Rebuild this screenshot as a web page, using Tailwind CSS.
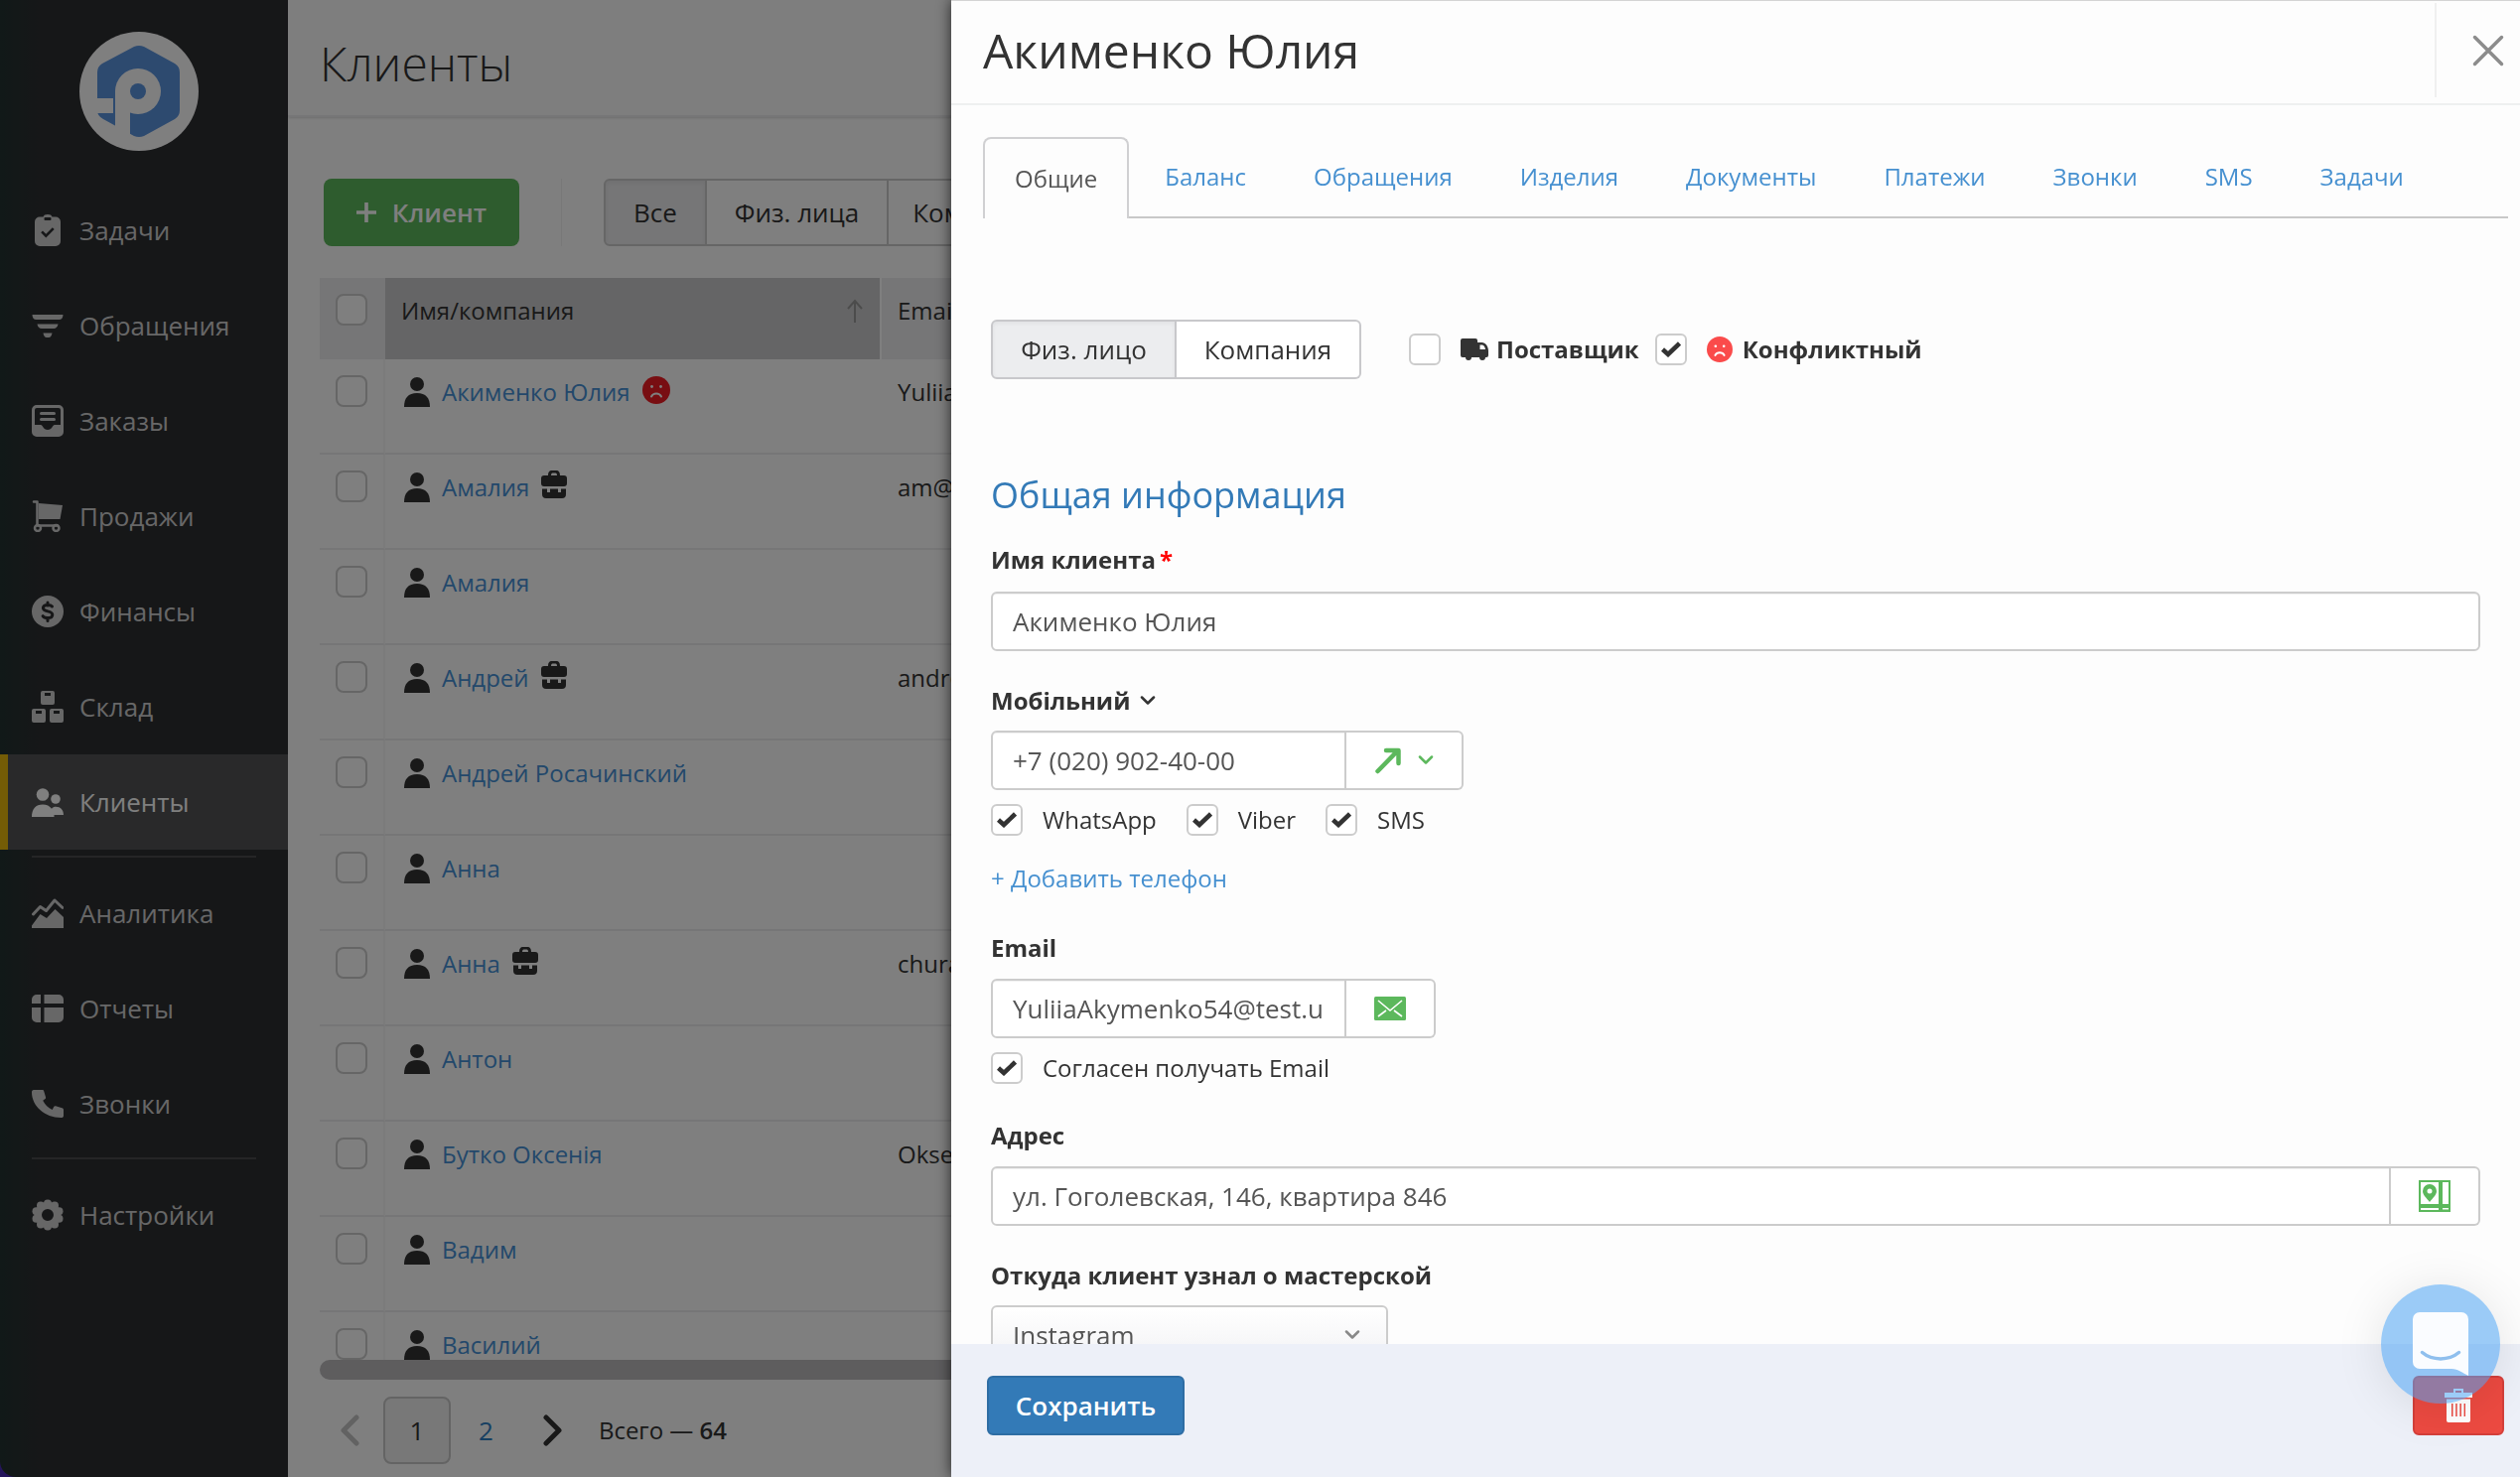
<!DOCTYPE html>
<html lang="ru">
<head>
  <meta charset="UTF-8">
  <meta name="viewport" content="width=device-width, initial-scale=1.0">
  <title>Клиенты – Акименко Юлия</title>
  <script src="https://cdn.jsdelivr.net/npm/@tailwindcss/browser@4"></script>
</head>
<body class="h-screen overflow-hidden bg-[#4a2ab8] font-['Open_Sans','Noto_Sans',sans-serif] text-2xl text-[#333]">

  <!-- Иконки -->
  <svg class="hidden" xmlns="http://www.w3.org/2000/svg">
    <symbol id="i-tasks" viewBox="0 0 32 32"><path fill="currentColor" fill-rule="evenodd" d="M8 2.500h3.500C12 .8 13.500 0 16 0s4 .8 4.500 2.500H24a5 5 0 0 1 5 5V27a5 5 0 0 1-5 5H8a5 5 0 0 1-5-5V7.500a5 5 0 0 1 5-5zM13.500 3a1 1 0 0 0-1 1v1a1 1 0 0 0 1 1h5a1 1 0 0 0 1-1V4a1 1 0 0 0-1-1zM9.200 18.200l1.800-1.800 3.300 3.300 6.500-6.500 1.900 1.900-8.400 8.400z"/></symbol>
    <symbol id="i-leads" viewBox="0 0 32 32"><path fill="currentColor" d="M.5 5h31c0 3-1.500 5-4 5h-23C2 10 .5 8 .5 5zM5.500 14.500h21c-.6 2.800-2 4.500-4.500 4.500H10c-2.500 0-4-1.700-4.500-4.500zM11.500 23.500h9c-.4 2.600-1.600 4.500-3.500 4.500h-2c-1.900 0-3.100-1.900-3.500-4.500z"/></symbol>
    <symbol id="i-orders" viewBox="0 0 32 32"><path fill="currentColor" fill-rule="evenodd" d="M5 0h22a5 5 0 0 1 5 5v22a5 5 0 0 1-5 5H5a5 5 0 0 1-5-5V5a5 5 0 0 1 5-5zm0 3a2 2 0 0 0-2 2v15h6c2 0 2.500 5 7 5s5-5 7-5h6V5a2 2 0 0 0-2-2z"/><path stroke="currentColor" stroke-width="3" stroke-linecap="round" d="M9.500 8.500h13M9.500 14.500h13"/></symbol>
    <symbol id="i-sales" viewBox="0 0 32 32"><path fill="currentColor" d="M7 3l24 2-2.500 14H7z"/><g fill="none" stroke="currentColor" stroke-width="2.500" stroke-linecap="round" stroke-linejoin="round"><path d="M2 1.500h3.500v24H26"/><circle cx="6" cy="28" r="3"/><circle cx="24.500" cy="28" r="3"/></g></symbol>
    <symbol id="i-finance" viewBox="0 0 32 32"><circle cx="16" cy="16" r="16" fill="currentColor"/><path fill="none" stroke="#2c2d2f" stroke-width="3" stroke-linecap="round" d="M20.500 11c-1-1.300-2.500-1.600-4.500-1.600-2.800 0-4.600 1-4.600 3.200 0 4.400 9.400 2.200 9.400 6.600 0 2.300-2 3.400-4.800 3.400-2.200 0-3.900-.6-4.900-2M16 7v3M16 22.500v3"/></symbol>
    <symbol id="i-stock" viewBox="0 0 32 32"><path fill="currentColor" fill-rule="evenodd" d="M11 0h10a2 2 0 0 1 2 2v10a2 2 0 0 1-2 2H11a2 2 0 0 1-2-2V2a2 2 0 0 1 2-2zm2 2v3h6V2zM2 18h10a2 2 0 0 1 2 2v10a2 2 0 0 1-2 2H2a2 2 0 0 1-2-2V20a2 2 0 0 1 2-2zm2 2v3h6v-3zM20 18h10a2 2 0 0 1 2 2v10a2 2 0 0 1-2 2H20a2 2 0 0 1-2-2V20a2 2 0 0 1 2-2zm2 2v3h6v-3z"/></symbol>
    <symbol id="i-clients" viewBox="0 0 32 32"><circle cx="11" cy="8.500" r="6.300" fill="currentColor"/><circle cx="24" cy="13" r="4.800" fill="currentColor"/><path fill="currentColor" d="M0 31c0-8 4-12.500 11-12.500 4 0 7 1.500 9 4.200 1.200-1.300 2.500-1.900 4.200-1.900C29 20.800 32 24 32 29h-9.500v2z"/></symbol>
    <symbol id="i-analytics" viewBox="0 0 32 32"><path fill="none" stroke="currentColor" stroke-width="3" stroke-linecap="round" stroke-linejoin="round" d="M1.500 17L8.500 9.500l6 4L23 3l8 7.500"/><path fill="currentColor" d="M0 31V28.500L8.500 17l6.500 4L23.500 12 32 20v11z"/></symbol>
    <symbol id="i-reports" viewBox="0 0 32 32"><path fill="currentColor" d="M5 2h4v9H0V7a5 5 0 0 1 5-5zM12.500 2H27a5 5 0 0 1 5 5v4H12.500zM0 15h9v15H5a5 5 0 0 1-5-5zM12.500 15H32v10a5 5 0 0 1-5 5H12.500z"/></symbol>
    <symbol id="i-calls" viewBox="0 0 32 32"><path fill="currentColor" d="M2 2h8.500c1 0 1.500.5 1.700 1.300l1.800 6c.3 1-.1 1.600-.8 2l-2 1.500c2.300 4.400 5 7 9.500 9.200l1.500-3c.5-.8 1-1 1.800-.8l6.500 2c1 .3 1.500.8 1.500 1.800V28c0 1.500-1 2-2.500 2C13 30 0 18 0 4.500 0 3 .5 2 2 2z"/></symbol>
    <symbol id="i-settings" viewBox="0 0 32 32"><circle cx="16" cy="16" r="9.500" fill="none" stroke="currentColor" stroke-width="7"/><g fill="currentColor"><circle cx="16" cy="4.500" r="4"/><circle cx="23" cy="6.500" r="4"/><circle cx="27.500" cy="12.300" r="4"/><circle cx="27.500" cy="19.700" r="4"/><circle cx="23" cy="25.500" r="4"/><circle cx="16" cy="27.500" r="4"/><circle cx="9" cy="25.500" r="4"/><circle cx="4.500" cy="19.700" r="4"/><circle cx="4.500" cy="12.300" r="4"/><circle cx="9" cy="6.500" r="4"/></g></symbol>
    <symbol id="i-person" viewBox="0 0 26 30"><circle cx="13" cy="7" r="7" fill="currentColor"/><path fill="currentColor" d="M0 30c0-9 4-14 13-14s13 5 13 14z"/></symbol>
    <symbol id="i-case" viewBox="0 0 26 28"><path fill="currentColor" fill-rule="evenodd" d="M7 5c0-3 1-5 4-5h4c3 0 4 2 4 5h4a3 3 0 0 1 3 3v5a3 3 0 0 1-3 3H3a3 3 0 0 1-3-3V8a3 3 0 0 1 3-3zm3 0h6c0-1.600-.5-2.500-1.500-2.500h-3C10.500 2.500 10 3.400 10 5zM1 18.500h5V22h3v-3.500h8V22h3v-3.500h5V24a4 4 0 0 1-4 4H5a4 4 0 0 1-4-4z"/></symbol>
    <symbol id="i-sad" viewBox="0 0 28 28"><circle cx="14" cy="14" r="14" fill="currentColor"/><circle cx="9.500" cy="10.500" r="1.400" fill="#fff"/><circle cx="18.500" cy="10.500" r="1.400" fill="#fff"/><path fill="none" stroke="#fff" stroke-width="2" stroke-linecap="round" d="M9 20.500c2-4 8-4 10 0"/></symbol>
    <symbol id="i-truck" viewBox="0 0 28 22"><path fill="currentColor" fill-rule="evenodd" d="M2 0h13a2 2 0 0 1 2 2v2h4.500c3.500 0 6.500 4 6.500 8.500V17a2 2 0 0 1-2 2h-1a3 3 0 0 1-6 0h-8a3 3 0 0 1-6 0H2a2 2 0 0 1-2-2V2a2 2 0 0 1 2-2zm17.500 6.500V11H25c-.3-2.500-1.800-4.500-3.500-4.500z"/></symbol>
    <symbol id="i-check" viewBox="0 0 20 16"><path fill="none" stroke="currentColor" stroke-width="4.500" d="M1.500 8l5.500 5L18.500 2"/></symbol>
    <symbol id="i-down" viewBox="0 0 16 10"><path fill="none" stroke="currentColor" stroke-width="2.500" stroke-linecap="round" stroke-linejoin="round" d="M2 1.500l6 6 6-6"/></symbol>
  </svg>

  <div class="flex h-full">
    <aside class="flex w-[290px] shrink-0 flex-col rounded-bl-2xl bg-[#2c2e30] bg-linear-to-r from-[#223230] to-[#2d2e31] to-15% pt-8 text-[26px] text-[#cfcfcf]">
      <a href="#" aria-label="Главная" class="mb-8 ml-20 block size-[120px]">
        <svg viewBox="0 0 120 120" class="size-full">
          <circle cx="60" cy="60" r="60" fill="#fff"/>
          <path fill="#5b94df" d="M55 15q5-2 10 0l31 17q5 3 5 9v38q0 6-5 9L65 105q-5 2-10 0L24 88q-6-3-6-9V41q0-6 5-9z"/>
          <path fill="#fff" d="M17 67h17v15H17zM36 60h15v50H36z"/>
          <circle cx="59" cy="60" r="23" fill="#fff"/>
          <circle cx="59" cy="60" r="8" fill="#5b94df"/>
        </svg>
      </a>
      <nav id="menu"></nav>
    </aside>

    <main class="flex min-w-0 flex-1 flex-col bg-white">
      <header class="flex h-[118px] shrink-0 items-center border-b-2 border-[#ececee] bg-[#fcfdfc] px-8 pt-3 shadow-sm">
        <h1 class="text-5xl font-light">Клиенты</h1>
      </header>

      <div class="flex h-[162px] shrink-0 items-stretch px-9 pt-[62px] pb-8">
        <button type="button" class="flex w-[197px] items-center justify-center gap-4 rounded-lg bg-[#5cb85c] text-[26px] font-semibold text-white">
          <svg class="size-5" viewBox="0 0 22 22"><path stroke="currentColor" stroke-width="4" d="M11 0v22M0 11h22"/></svg>
          Клиент
        </button>
        <div class="mx-[42px] w-px bg-[#f0f0f0]"></div>
        <div class="flex text-[26px] whitespace-nowrap">
          <button type="button" class="w-[104px] rounded-l-md border-2 border-[#ccc] bg-[#ececee] inset-shadow-sm">Все</button>
          <button type="button" class="w-[181px] border-y-2 border-[#ccc]">Физ. лица</button>
          <button type="button" class="w-[183px] rounded-r-md border-2 border-[#ccc]">Компании</button>
        </div>
      </div>

      <div class="ml-8 min-h-0 flex-1 overflow-hidden">
        <table class="w-full table-fixed border-separate border-spacing-0 text-left">
          <colgroup>
            <col class="w-[66px]"><col class="w-[500px]"><col>
          </colgroup>
          <thead>
            <tr class="h-[82px] align-top">
              <th class="bg-[#ececee] pt-4 pl-4"><input type="checkbox" aria-label="Выбрать все" class="block size-8 appearance-none rounded-lg border-2 border-[#ccc] bg-white"></th>
              <th class="border-r-2 border-white bg-[#cacbcc] pt-4 pr-4 pl-4 font-normal">
                <div class="flex h-[34px] items-center justify-between">
                  Имя/компания
                  <svg class="h-6 w-[18px] text-[#999]" viewBox="0 0 18 24"><path fill="none" stroke="currentColor" stroke-width="2" d="M9 24V2M2 10l7-8 7 8"/></svg>
                </div>
              </th>
              <th class="bg-[#ececee] pt-4 pl-4 font-normal"><div class="flex h-[34px] items-center">Email</div></th>
            </tr>
          </thead>
          <tbody id="clients"></tbody>
        </table>
      </div>
      <div class="ml-8 h-5 shrink-0 rounded-l-full bg-[#bcbabd]"></div>

      <footer class="flex h-[98px] shrink-0 items-center pt-1 pl-[52px]">
        <button type="button" aria-label="Назад" class="text-[#c4c4c4]"><svg class="h-8 w-5" viewBox="0 0 20 32"><path fill="none" stroke="currentColor" stroke-width="5" stroke-linecap="round" stroke-linejoin="round" d="M17 3L4 16l13 13"/></svg></button>
        <span class="ml-6 flex h-[68px] w-[68px] items-center justify-center rounded-lg border-2 border-[#c8c8c8] bg-[#f0f0f0] text-[26px]">1</span>
        <a href="#" class="ml-7 text-[26px] text-[#2f7fc4]">2</a>
        <button type="button" aria-label="Вперёд" class="ml-[50px]"><svg class="h-8 w-5" viewBox="0 0 20 32"><path fill="none" stroke="currentColor" stroke-width="5" stroke-linecap="round" stroke-linejoin="round" d="M3 3l13 13L3 29"/></svg></button>
        <span class="ml-9">Всего — <b class="font-semibold">64</b></span>
      </footer>
    </main>
  </div>

  <!-- Затемнение -->
  <div class="fixed inset-0 bg-black/50"></div>

  <!-- Карточка клиента -->
  <section class="fixed inset-y-0 right-0 left-[958px] flex flex-col border-t border-[#d4d4d4] bg-[#fdfdfd] shadow-[0_0_14px_rgba(0,0,0,0.7)]">
    <header class="flex h-[105px] shrink-0 items-stretch justify-between border-b-2 border-[#eef0f0] pl-8">
      <h2 class="pt-4 text-5xl leading-[68px]">Акименко Юлия</h2>
      <button type="button" aria-label="Закрыть" class="mt-0.5 mb-1.5 flex w-[86px] items-center justify-end border-l-2 border-[#f0f0f0] pr-4 text-[#8c8c8c]">
        <svg class="size-8" viewBox="0 0 32 32"><path stroke="currentColor" stroke-width="3.500" stroke-linecap="round" d="M2.500 2.500l27 27M29.500 2.500l-27 27"/></svg>
      </button>
    </header>

    <div class="min-h-0 flex-1 overflow-hidden">
      <nav class="mt-8 mr-3 ml-8 flex h-[82px] gap-1 border-b-2 border-[#c8c8c8] text-[#4690d0]">
        <a href="#" class="-mb-0.5 flex items-center rounded-t-lg border-2 border-b-0 border-[#d0d0d2] bg-[#fdfdfd] px-[30px] text-[#555]">Общие</a>
        <a href="#" class="flex items-center px-8">Баланс</a>
        <a href="#" class="flex items-center px-8">Обращения</a>
        <a href="#" class="flex items-center px-8">Изделия</a>
        <a href="#" class="flex items-center px-8">Документы</a>
        <a href="#" class="flex items-center px-8">Платежи</a>
        <a href="#" class="flex items-center px-8">Звонки</a>
        <a href="#" class="flex items-center px-8">SMS</a>
        <a href="#" class="flex items-center px-8">Задачи</a>
      </nav>

      <form id="clientForm" class="mr-10 ml-10">
        <div class="mt-[102px] flex h-[60px] items-center">
          <div class="flex h-full text-[26px]">
            <button type="button" class="w-[187px] rounded-l-md border-2 border-[#c8c8cb] bg-[#ecedef] inset-shadow-sm">Физ. лицо</button>
            <button type="button" class="w-[186px] rounded-r-md border-2 border-l-0 border-[#c8c8cb] bg-white">Компания</button>
          </div>
          <label class="ml-12 flex items-center font-bold">
            <input type="checkbox" class="size-8 appearance-none rounded-md border-2 border-[#ccc] bg-white">
            <svg class="mr-2 ml-5 h-[22px] w-7"><use href="#i-truck"/></svg>
            Поставщик
          </label>
          <label class="ml-4 flex items-center font-bold">
            <span class="grid place-items-center">
              <input type="checkbox" checked class="peer col-start-1 row-start-1 size-8 appearance-none rounded-md border-2 border-[#ccc] bg-white">
              <svg class="pointer-events-none invisible col-start-1 row-start-1 h-4 w-5 peer-checked:visible"><use href="#i-check"/></svg>
            </span>
            <svg class="mr-2.5 ml-5 size-[26px] text-[#fa4b4b]"><use href="#i-sad"/></svg>
            Конфликтный
          </label>
        </div>

        <h3 class="mt-[90px] text-4xl leading-[54px] text-[#337ab7]">Общая информация</h3>

        <label for="name" class="mt-5 block leading-9 font-bold">Имя клиента<span class="ml-1 text-[#f00]">*</span></label>
        <input id="name" type="text" value="Акименко Юлия" class="mt-3.5 block h-[60px] w-full rounded-md border-2 border-[#ccc] bg-white px-5 text-[26px] text-[#555] inset-shadow-2xs">

        <label for="phone" class="mt-8 flex items-center gap-2.5 leading-9 font-bold">Мобільний <svg class="h-2.5 w-4"><use href="#i-down"/></svg></label>
        <div class="mt-3 flex h-[60px]">
          <input id="phone" type="tel" value="+7 (020) 902-40-00" class="w-[358px] rounded-l-md border-2 border-[#ccc] bg-white px-5 text-[26px] text-[#555] inset-shadow-2xs">
          <button type="button" aria-label="Позвонить" class="flex w-[118px] items-center justify-center gap-4 rounded-r-md border-2 border-l-0 border-[#ccc] bg-white text-[#5cb85c]">
            <svg class="size-7" viewBox="0 0 28 28"><path fill="none" stroke="currentColor" stroke-width="4.500" stroke-linecap="round" stroke-linejoin="round" d="M3.500 25L23 5M12 4h12.500v13"/></svg>
            <svg class="h-2.5 w-4"><use href="#i-down"/></svg>
          </button>
        </div>
        <div id="channels" class="mt-3.5 flex gap-[30px]"></div>
        <a href="#" class="mt-[25px] block leading-9 text-[#4690d0]">+ Добавить телефон</a>

        <label for="email" class="mt-[34px] block leading-9 font-bold">Email</label>
        <div class="mt-[13px] flex h-[60px]">
          <input id="email" type="text" value="YuliiaAkymenko54@test.ua" class="w-[358px] rounded-l-md border-2 border-[#ccc] bg-white px-5 text-[26px] text-[#555] inset-shadow-2xs">
          <button type="button" aria-label="Написать письмо" class="flex w-[90px] items-center justify-center rounded-r-md border-2 border-l-0 border-[#ccc] bg-white">
            <svg class="h-6 w-8" viewBox="0 0 32 24"><rect width="32" height="24" rx="1.500" fill="#5cb85c"/><path fill="none" stroke="#fff" stroke-width="1.600" d="M4 4l12 10L28 4M4 20l8-6M28 20l-8-6"/></svg>
          </button>
        </div>
        <div id="agree" class="mt-3.5"></div>

        <label for="address" class="mt-[34px] block leading-9 font-bold">Адрес</label>
        <div class="mt-[13px] flex h-[60px]">
          <input id="address" type="text" value="ул. Гоголевская, 146, квартира 846" class="min-w-0 flex-1 rounded-l-md border-2 border-[#ccc] bg-white px-5 text-[26px] text-[#555] inset-shadow-2xs">
          <button type="button" aria-label="Показать на карте" class="flex w-[90px] items-center justify-center rounded-r-md border-2 border-l-0 border-[#ccc] bg-white">
            <svg class="size-8" viewBox="0 0 32 32"><path fill="#5cb85c" fill-rule="evenodd" d="M0 0h32v32H0zm2 2v22h18V2zm22 0v22h6V2zM2 28v2h18v-2zm22 0v1.500h6V28z"/><path fill="#5cb85c" fill-rule="evenodd" d="M11 4a7 7 0 0 0-7 7c0 4 4 7 7 11 3-4 7-7 7-11a7 7 0 0 0-7-7zm0 4.500a2.500 2.500 0 1 1 0 5 2.500 2.500 0 0 1 0-5z"/></svg>
          </button>
        </div>

        <label for="source" class="mt-8 block leading-9 font-bold">Откуда клиент узнал о мастерской</label>
        <div class="mt-3 grid w-[400px] items-center">
          <select id="source" class="col-start-1 row-start-1 h-[60px] appearance-none rounded-md border-2 border-[#ccc] bg-white bg-linear-to-b from-white to-[#f2f2f4] px-5 text-[26px] text-[#555]">
            <option>Instagram</option>
            <option>Facebook</option>
          </select>
          <svg class="pointer-events-none col-start-1 row-start-1 mr-7 h-2.5 w-4 justify-self-end text-[#888]"><use href="#i-down"/></svg>
        </div>
      </form>
    </div>

    <footer class="flex h-[134px] shrink-0 items-start justify-between bg-[#edf0f8] pt-8 pr-4 pl-9">
      <button type="submit" form="clientForm" class="h-[60px] w-[199px] rounded-md border-2 border-[#2e6da4] bg-[#337ab7] text-[26px] font-semibold text-white">Сохранить</button>
      <button type="button" aria-label="Удалить" class="flex h-[60px] w-[92px] items-center justify-center rounded-md border-2 border-[#d43f3a] bg-[#ec4a41] text-white">
        <svg class="h-[34px] w-7" viewBox="0 0 28 34"><path fill="currentColor" fill-rule="evenodd" d="M9 0h10v4h9v5H0V4h9zm2 2v2h6V2zM2 10.500h24V32a2 2 0 0 1-2 2H4a2 2 0 0 1-2-2zM7 15v13h1.500V15zm4.200 0v13h1.500V15zm4.200 0v13h1.500V15zm4.200 0v13H21V15z"/></svg>
      </button>
    </footer>
  </section>

  <!-- Чат поддержки -->
  <button type="button" aria-label="Чат" class="fixed right-5 bottom-[74px] flex size-[120px] items-center justify-center rounded-full bg-[#4ba3f2]/55 shadow-[0_4px_50px_rgba(0,0,0,0.1)]">
    <svg class="h-16 w-14" viewBox="0 0 56 64"><path fill="#fff" fill-opacity=".95" d="M7 0h42a7 7 0 0 1 7 7v57c-6-3-10-7-17-7H7a7 7 0 0 1-7-7V7a7 7 0 0 1 7-7z"/><path fill="none" stroke="#8fbfee" stroke-width="3.500" stroke-linecap="round" d="M9.500 40.500c10 8.500 27 8.500 37 0"/></svg>
  </button>

  <script>
    const menu = [
      ["tasks", "Задачи"], ["leads", "Обращения"], ["orders", "Заказы"], ["sales", "Продажи"],
      ["finance", "Финансы"], ["stock", "Склад"], ["clients", "Клиенты", true], null,
      ["analytics", "Аналитика"], ["reports", "Отчеты"], ["calls", "Звонки"], null,
      ["settings", "Настройки"]
    ];
    document.getElementById("menu").innerHTML = menu.map(item => {
      if (!item) return `<hr class="mx-8 mt-1.5 mb-2 border-t-2 border-[#4a4b4d]">`;
      const [icon, title, active] = item;
      const state = active ? "border-[#e8b90c] bg-[#525354] text-white" : "border-transparent";
      return `<a href="#" class="flex h-24 items-center gap-4 border-l-8 pl-6 ${state}">
        <svg class="size-8 shrink-0"><use href="#i-${icon}"/></svg>${title}</a>`;
    }).join("");

    const clients = [
      ["Акименко Юлия", "sad", "Yuliia@t.ua"], ["Амалия", "case", "am@t.ua"], ["Амалия"],
      ["Андрей", "case", "andr@t.ua"], ["Андрей Росачинский"], ["Анна"], ["Анна", "case", "chura"],
      ["Антон"], ["Бутко Оксенія", "", "Oksen"], ["Вадим"], ["Василий"]
    ];
    const badges = {
      sad: `<svg class="size-7 -mt-1 text-[#f01c24]"><use href="#i-sad"/></svg>`,
      case: `<svg class="h-7 w-[26px] -mt-1.5"><use href="#i-case"/></svg>`
    };
    document.getElementById("clients").innerHTML = clients.map(([name, badge, email]) => `
      <tr class="h-24 align-top">
        <td class="border-r-2 border-b-2 border-r-[#f6f6f6] border-b-[#ededee] pt-4 pl-4"><input type="checkbox" aria-label="${name}" class="block size-8 appearance-none rounded-lg border-2 border-[#ccc] bg-white"></td>
        <td class="border-b-2 border-[#ededee] pt-4 pl-[19px]"><div class="flex h-[34px] items-center gap-3">
          <svg class="h-[30px] w-[26px]"><use href="#i-person"/></svg>
          <a href="#" class="text-[#4691d6]">${name}</a>${badges[badge] || ""}</div></td>
        <td class="border-b-2 border-[#ededee] pt-4 pl-4"><div class="flex h-[34px] items-center">${email || ""}</div></td>
      </tr>`).join("");

    const tick = title => `
      <label class="flex h-8 items-center gap-5">
        <span class="grid place-items-center">
          <input type="checkbox" checked class="peer col-start-1 row-start-1 size-8 appearance-none rounded-md border-2 border-[#ccc] bg-white">
          <svg class="pointer-events-none invisible col-start-1 row-start-1 h-4 w-5 peer-checked:visible"><use href="#i-check"/></svg>
        </span>${title}</label>`;
    document.getElementById("channels").innerHTML = ["WhatsApp", "Viber", "SMS"].map(tick).join("");
    document.getElementById("agree").innerHTML = tick("Согласен получать Email");
  </script>
</body>
</html>
